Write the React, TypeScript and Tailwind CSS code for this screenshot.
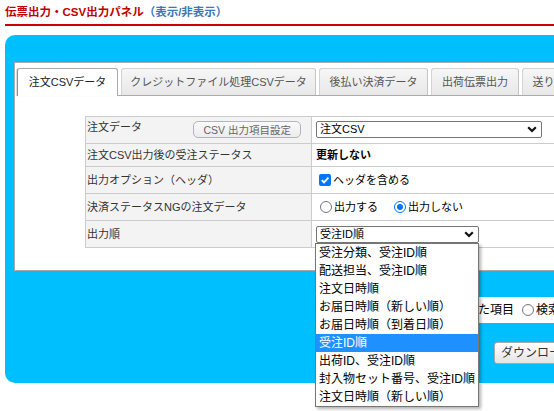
import React from 'react';

const TABS = [
  { label: '注文CSVデータ', w: 'w-[101px]' },
  { label: 'クレジットファイル処理CSVデータ', w: 'w-[195px]' },
  { label: '後払い決済データ', w: 'w-[109px]' },
  { label: '出荷伝票出力', w: 'w-[88px]' },
  { label: '送り状データ出力', w: 'w-[109px]' },
];

const SORT_OPTIONS = [
  '受注分類、受注ID順',
  '配送担当、受注ID順',
  '注文日時順',
  'お届日時順（新しい順）',
  'お届日時順（到着日順）',
  '受注ID順',
  '出荷ID、受注ID順',
  '封入物セット番号、受注ID順',
  '注文日時順（新しい順）',
];

function Chevron() {
  return (
    <svg width="10" height="7" viewBox="0 0 10 7" className="shrink-0">
      <path d="M1.2 1.2 L5 5 L8.8 1.2" fill="none" stroke="#111" strokeWidth="2.2" />
    </svg>
  );
}

function SelectBox({ value, width }: { value: string; width: string }) {
  return (
    <div
      className={`${width} h-[17px] flex items-center justify-between border border-[#767676] rounded-[2px] bg-white pl-[3px] pr-[4px] text-[11px] leading-[15px] text-black`}
    >
      <span>{value}</span>
      <Chevron />
    </div>
  );
}

function Checkbox() {
  return (
    <span className="w-[12px] h-[12px] rounded-[2px] bg-[#0075ff] flex items-center justify-center shrink-0">
      <svg width="10" height="10" viewBox="0 0 10 10">
        <path d="M1.8 5.2 L4 7.4 L8.4 2.6" fill="none" stroke="white" strokeWidth="1.8" />
      </svg>
    </span>
  );
}

function Radio({ checked }: { checked?: boolean }) {
  return checked ? (
    <span className="w-[12px] h-[12px] rounded-full border-[1.5px] border-[#0075ff] bg-white flex items-center justify-center shrink-0">
      <span className="w-[6px] h-[6px] rounded-full bg-[#0075ff]" />
    </span>
  ) : (
    <span className="w-[12px] h-[12px] rounded-full border border-[#767676] bg-white shrink-0" />
  );
}

function Row({ label, children, height, top }: { label: React.ReactNode; children: React.ReactNode; height: string; top?: boolean }) {
  return (
    <div className={`flex ${height} border-b border-[#cccccc]`}>
      <div
        className={`w-[226px] shrink-0 bg-[#f3f3f3] border-r border-[#cccccc] pl-[1px] flex ${top ? 'items-start pt-[2px] pr-[10px]' : 'items-center'}`}
      >
        {label}
      </div>
      <div className="w-[420px] flex items-center pl-[4px] relative">{children}</div>
    </div>
  );
}

export default function App() {
  return (
    <div className="w-full h-[411px] overflow-hidden bg-white text-[#333] font-['Liberation_Sans','Noto_Sans_CJK_JP',sans-serif]">
      <div className="w-[780px] pl-[5px]">
        <div className="h-[24px] pt-[5px] text-[11.5px] leading-[14px] font-bold text-[#c00000]">
          伝票出力・CSV出力パネル<span className="text-[#3c78b4]">（表示/非表示）</span>
        </div>
        <div className="h-[2px] bg-[#cc0000]" />

        <div className="mt-[9px] bg-[#00bfff] rounded-[10px] pt-[27px] pl-[9px] pb-[19px]">
          <div className="border border-[#aaaaaa] bg-white px-[2px] pt-[5px] pb-[22px]">
            {/* tabs */}
            <div className="flex gap-[3px] h-[28px] border-b border-[#aaaaaa]">
              {TABS.map((t, i) =>
                i === 0 ? (
                  <div
                    key={t.label}
                    className={`${t.w} shrink-0 h-[28px] -mb-[1px] flex items-center justify-center whitespace-nowrap bg-white border border-b-0 border-[#aaaaaa] border-l-[#8f8f8f] rounded-t-[3px] shadow-[-1px_0_1px_rgba(0,0,0,0.15)] text-[11px] text-[#222]`}
                  >
                    {t.label}
                  </div>
                ) : (
                  <div
                    key={t.label}
                    className={`${t.w} shrink-0 h-[27px] flex items-center justify-center whitespace-nowrap bg-gradient-to-b from-[#f6f6f6] to-[#e8e8e8] border border-b-0 border-[#d3d3d3] border-r-[#c4c4c4] rounded-t-[3px] text-[11px] text-[#555]`}
                  >
                    {t.label}
                  </div>
                )
              )}
            </div>

            {/* settings table */}
            <div className="mt-[20px] ml-[68px] border-t border-l border-[#cccccc] text-[11px] leading-[16px]">
              <Row
                height="h-[27px]"
                top
                label={
                  <>
                    <span>注文データ</span>
                    <span className="ml-auto mt-[2px] h-[17px] px-[9px] flex items-center rounded-[5px] border border-[#b3b3c0] bg-gradient-to-b from-[#fafafa] to-[#ececec] text-[10.5px] text-[#666]">
                      CSV 出力項目設定
                    </span>
                  </>
                }
              >
                <div className="self-start mt-[4px]">
                  <SelectBox value="注文CSV" width="w-[226px]" />
                </div>
              </Row>
              <Row height="h-[23px]" label="注文CSV出力後の受注ステータス">
                <span className="font-bold text-black">更新しない</span>
              </Row>
              <Row height="h-[27px]" label="出力オプション（ヘッダ）">
                <span className="flex items-center gap-[2px] ml-[3px] text-black">
                  <Checkbox />
                  ヘッダを含める
                </span>
              </Row>
              <Row height="h-[27px]" label="決済ステータスNGの注文データ">
                <span className="flex items-center gap-[2px] ml-[4px] text-black">
                  <Radio />
                  出力する
                </span>
                <span className="flex items-center gap-[2px] ml-[16px] text-black">
                  <Radio checked />
                  出力しない
                </span>
              </Row>
              <Row height="h-[27px]" label="出力順">
                <div className="relative">
                  <SelectBox value="受注ID順" width="w-[163px]" />
                  <ul className="absolute left-[-1px] top-full z-10 w-[164px] border border-[#767676] bg-white shadow-[2px_2px_3px_rgba(0,0,0,0.3)] text-[12px] leading-[18px] text-black">
                    {SORT_OPTIONS.map((o) => (
                      <li
                        key={o}
                        className={`h-[18px] pl-[3px] whitespace-nowrap ${o === '受注ID順' ? 'bg-[#1e90ff] text-white' : ''}`}
                      >
                        {o}
                      </li>
                    ))}
                  </ul>
                </div>
              </Row>
            </div>
          </div>

          {/* output target */}
          <div className="mt-[26px] ml-[404px] h-[26px] bg-white flex items-center pl-[10px] text-[12px] text-black">
            <span className="flex items-center gap-[2px]">
              <Radio />
              選択した項目
            </span>
            <span className="flex items-center gap-[2px] ml-[8px]">
              <Radio />
              検索結果の全件
            </span>
          </div>

          <div className="mt-[19px] ml-[480px] flex">
            <span className="h-[22px] px-[6px] flex items-center rounded-[3px] border border-[#a9a9a9] bg-gradient-to-b from-[#ffffff] to-[#e4e4e4] text-[12px] text-[#333]">
              ダウンロード（注文CSV）
            </span>
          </div>
        </div>
      </div>
    </div>
  );
}
